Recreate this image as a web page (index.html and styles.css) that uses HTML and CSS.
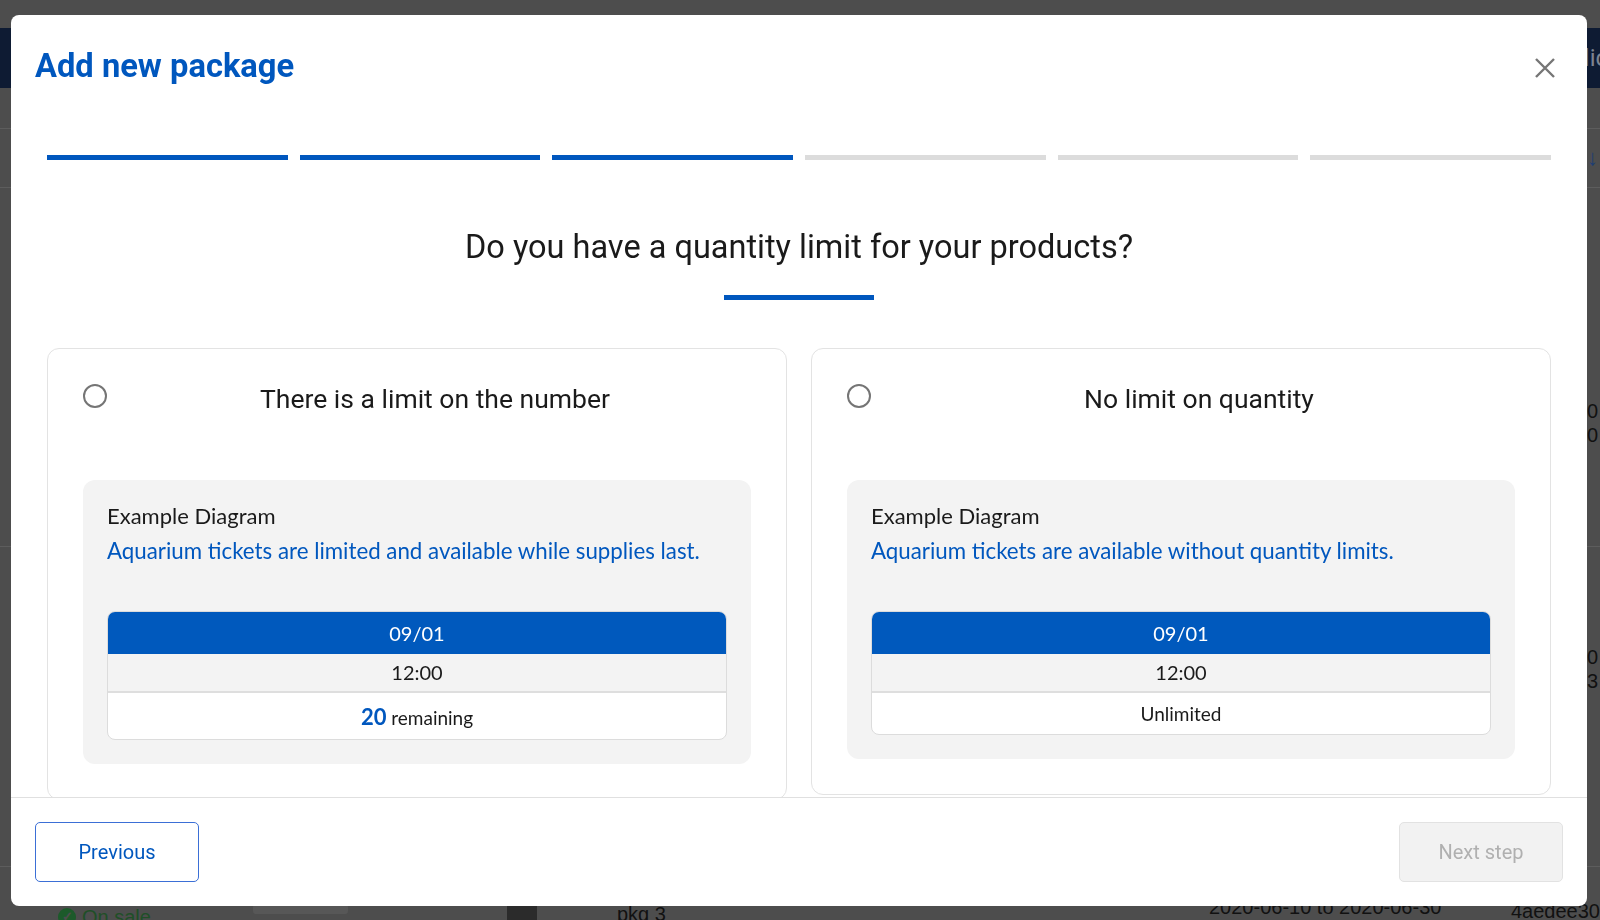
FILE: index.html
```html
<!DOCTYPE html>
<html lang="en">
<head>
<meta charset="utf-8">
<title>Add new package</title>
<link rel="stylesheet" href="styles.css">
</head>
<body>
<div class="page">
  <div class="topbar"><span class="topbar-text">Public</span></div>
  <div class="bg-row bg-row-a"></div>
  <div class="bg-row bg-row-b"><span class="bg-sort">↓</span></div>
  <div class="bg-row bg-row-c"><span class="bg-cell">00<br>00</span></div>
  <div class="bg-row bg-row-d"><span class="bg-cell">00<br>23</span></div>
  <div class="bg-row bg-row-e">
    <span class="bg-status"><span class="bg-check">✓</span>On sale</span>
    <span class="bg-chip"></span>
    <span class="bg-thumb"></span>
    <span class="bg-name">pkg 3</span>
    <span class="bg-date">2020-06-10 to 2020-06-30</span>
    <span class="bg-id">4aedee30</span>
  </div>
</div>

<div class="modal" role="dialog" aria-labelledby="modal-title">
  <div class="modal-header">
    <h1 class="modal-title" id="modal-title">Add new package</h1>
    <button class="close-btn" aria-label="Close">
      <svg width="22" height="22" viewBox="0 0 22 22"><path d="M2 2 L20 20 M20 2 L2 20" stroke="#767676" stroke-width="2.4" fill="none"/></svg>
    </button>
  </div>

  <div class="steps">
    <span class="step done"></span>
    <span class="step done"></span>
    <span class="step done"></span>
    <span class="step"></span>
    <span class="step"></span>
    <span class="step"></span>
  </div>

  <div class="modal-body">
    <h2 class="question">Do you have a quantity limit for your products?</h2>
    <div class="question-line"></div>

    <div class="options">
      <label class="option">
        <div class="option-head">
          <span class="radio"></span>
          <span class="option-title">There is a limit on the number</span>
        </div>
        <div class="example">
          <div class="example-label">Example Diagram</div>
          <div class="example-desc">Aquarium tickets are limited and available while supplies last.</div>
          <div class="ticket">
            <div class="ticket-date">09/01</div>
            <div class="ticket-time">12:00</div>
            <div class="ticket-stock tall"><span class="stock-num">20</span> remaining</div>
          </div>
        </div>
      </label>

      <label class="option">
        <div class="option-head">
          <span class="radio"></span>
          <span class="option-title">No limit on quantity</span>
        </div>
        <div class="example">
          <div class="example-label">Example Diagram</div>
          <div class="example-desc">Aquarium tickets are available without quantity limits.</div>
          <div class="ticket">
            <div class="ticket-date">09/01</div>
            <div class="ticket-time">12:00</div>
            <div class="ticket-stock small">Unlimited</div>
          </div>
        </div>
      </label>
    </div>
  </div>

  <div class="modal-footer">
    <button class="btn btn-outline">Previous</button>
    <button class="btn btn-disabled" disabled>Next step</button>
  </div>
</div>
</body>
</html>
```

FILE: styles.css
```css
* { box-sizing: border-box; }

html, body {
  margin: 0;
  padding: 0;
}

body {
  width: 1600px;
  height: 920px;
  overflow: hidden;
  background: #4d4d4d;
  font-family: Roboto, "Liberation Sans", sans-serif;
}

/* ---------- dimmed page behind the dialog ---------- */
.page {
  height: 920px;
  overflow: hidden;
}

.topbar {
  margin-top: 28px;
  height: 60px;
  background: #0e1b33;
  display: flex;
  align-items: center;
  padding-left: 1542px;
  white-space: nowrap;
}

.topbar-text {
  color: #7c8391;
  font-size: 24px;
}

.bg-row {
  border-bottom: 1px solid #5d5d5d;
  white-space: nowrap;
}

.bg-row-a { height: 41px; }
.bg-row-b { height: 59px; display: flex; align-items: center; padding-left: 1587px; }
.bg-row-c { height: 359px; display: flex; align-items: flex-start; padding-top: 211px; padding-left: 1576px; }
.bg-row-d { height: 320px; display: flex; align-items: flex-start; padding-top: 98px; padding-left: 1576px; }

.bg-sort {
  color: #1d3e73;
  font-size: 22px;
  font-weight: bold;
}

.bg-cell {
  color: #111;
  font-size: 20px;
  line-height: 24px;
  font-family: "Liberation Sans", sans-serif;
}

.bg-row-e {
  border-bottom: none;
  height: 60px;
  display: flex;
  align-items: flex-start;
  padding-top: 39px;
  font-family: "Liberation Sans", sans-serif;
  font-size: 20px;
  line-height: 22px;
  color: #111;
}

.bg-status {
  margin-left: 58px;
  color: #1f4f27;
  display: flex;
  align-items: center;
  gap: 6px;
  width: 195px;
}

.bg-check {
  width: 18px;
  height: 18px;
  border-radius: 50%;
  background: #1c5a2a;
  color: #4d4d4d;
  font-size: 13px;
  line-height: 18px;
  text-align: center;
  font-weight: bold;
}

.bg-chip {
  width: 95px;
  height: 10px;
  margin-top: -2px;
  background: #575757;
  border-radius: 3px;
  margin-right: 159px;
}

.bg-thumb {
  width: 30px;
  height: 20px;
  margin-top: -6px;
  background: #2b2b2b;
  margin-right: 80px;
}

.bg-name { width: 592px; margin-top: -3px; }

.bg-date { width: 302px; margin-top: -10px; }

.bg-id { margin-top: -6px; }

/* ---------- dialog ---------- */
.modal {
  position: fixed;
  left: 11px;
  top: 15px;
  width: 1576px;
  height: 891px;
  background: #fff;
  border-radius: 8px;
  display: flex;
  flex-direction: column;
  overflow: hidden;
}

.modal-header {
  display: flex;
  justify-content: space-between;
  align-items: center;
  padding: 31px 24px 0 24px;
  flex: none;
}

.modal-title {
  margin: 0;
  font-size: 32.7px;
  line-height: 40px;
  font-weight: 700;
  color: #0057be;
}

.close-btn {
  width: 36px;
  height: 36px;
  border: none;
  background: transparent;
  padding: 0;
  display: flex;
  align-items: center;
  justify-content: center;
  margin-top: 4px;
}

.steps {
  display: flex;
  gap: 12px;
  padding: 0 36px;
  margin-top: 69px;
  flex: none;
}

.step {
  flex: 1;
  height: 5px;
  background: #dcdcdc;
}

.step.done { background: #0057be; }

.modal-body {
  flex: 1 1 auto;
  min-height: 0;
  overflow: hidden;
  padding: 0 36px;
  display: flex;
  flex-direction: column;
  align-items: center;
}

.modal-body > * { flex-shrink: 0; }

.question {
  margin: 69px 0 0 0;
  font-size: 32.5px;
  line-height: 36px;
  font-weight: 400;
  color: #1a1a1a;
  text-align: center;
}

.question-line {
  width: 150px;
  height: 5px;
  background: #0057be;
  margin-top: 30px;
}

.options {
  margin-top: 48px;
  width: 100%;
  display: grid;
  grid-template-columns: 1fr 1fr;
  gap: 24px;
  align-items: start;
}

.option {
  border: 1px solid #e3e3e3;
  border-radius: 12px;
  padding: 35px;
  display: block;
}

.option-head {
  display: flex;
  align-items: center;
  gap: 12px;
  height: 32px;
  margin-top: -1px;
}

.radio {
  width: 24px;
  height: 24px;
  border-radius: 50%;
  border: 2px solid #757575;
  flex: none;
  margin-top: -7px;
}

.option-title {
  flex: 1;
  text-align: center;
  font-size: 26.5px;
  line-height: 32px;
  color: #1a1a1a;
}

.example {
  margin-top: 65px;
  background: #f3f3f3;
  border-radius: 12px;
  padding: 24px;
  font-family: Lato, "Noto Sans", sans-serif;
}

.example-label {
  font-size: 22px;
  line-height: 26px;
  color: #1a1a1a;
  margin-top: -1px;
}

.example-desc {
  margin-top: 9px;
  font-size: 22.3px;
  line-height: 26px;
  color: #0057be;
}

.ticket {
  margin-top: 47px;
  border: 1px solid #dcdcdc;
  border-radius: 8px;
  overflow: hidden;
  background: #fff;
  text-align: center;
  color: #1a1a1a;
}

.ticket-date {
  height: 42px;
  line-height: 42px;
  background: #0059bd;
  color: #fff;
  font-size: 20px;
}

.ticket-time {
  height: 39px;
  line-height: 37px;
  background: #f3f3f3;
  border-bottom: 2px solid #dedede;
  font-size: 20px;
}

.ticket-stock.tall {
  height: 46px;
  line-height: 48px;
  font-size: 19px;
}

.ticket-stock.small {
  height: 41px;
  line-height: 41px;
  font-size: 19px;
}

.stock-num {
  color: #0057be;
  font-weight: 700;
  font-size: 22px;
}

.modal-footer {
  border-top: 1px solid #e0e0e0;
  padding: 24px 24px 24px 24px;
  display: flex;
  justify-content: space-between;
  flex: none;
}

.btn {
  width: 164px;
  height: 60px;
  border-radius: 5px;
  font-family: Roboto, "Liberation Sans", sans-serif;
  font-size: 20px;
  padding: 0;
}

.btn-outline {
  background: #fff;
  border: 1px solid #3b6fd6;
  color: #0057be;
}

.btn-disabled {
  background: #f2f2f2;
  border: 1px solid #e2e2e2;
  color: #b0b0b0;
}
```
